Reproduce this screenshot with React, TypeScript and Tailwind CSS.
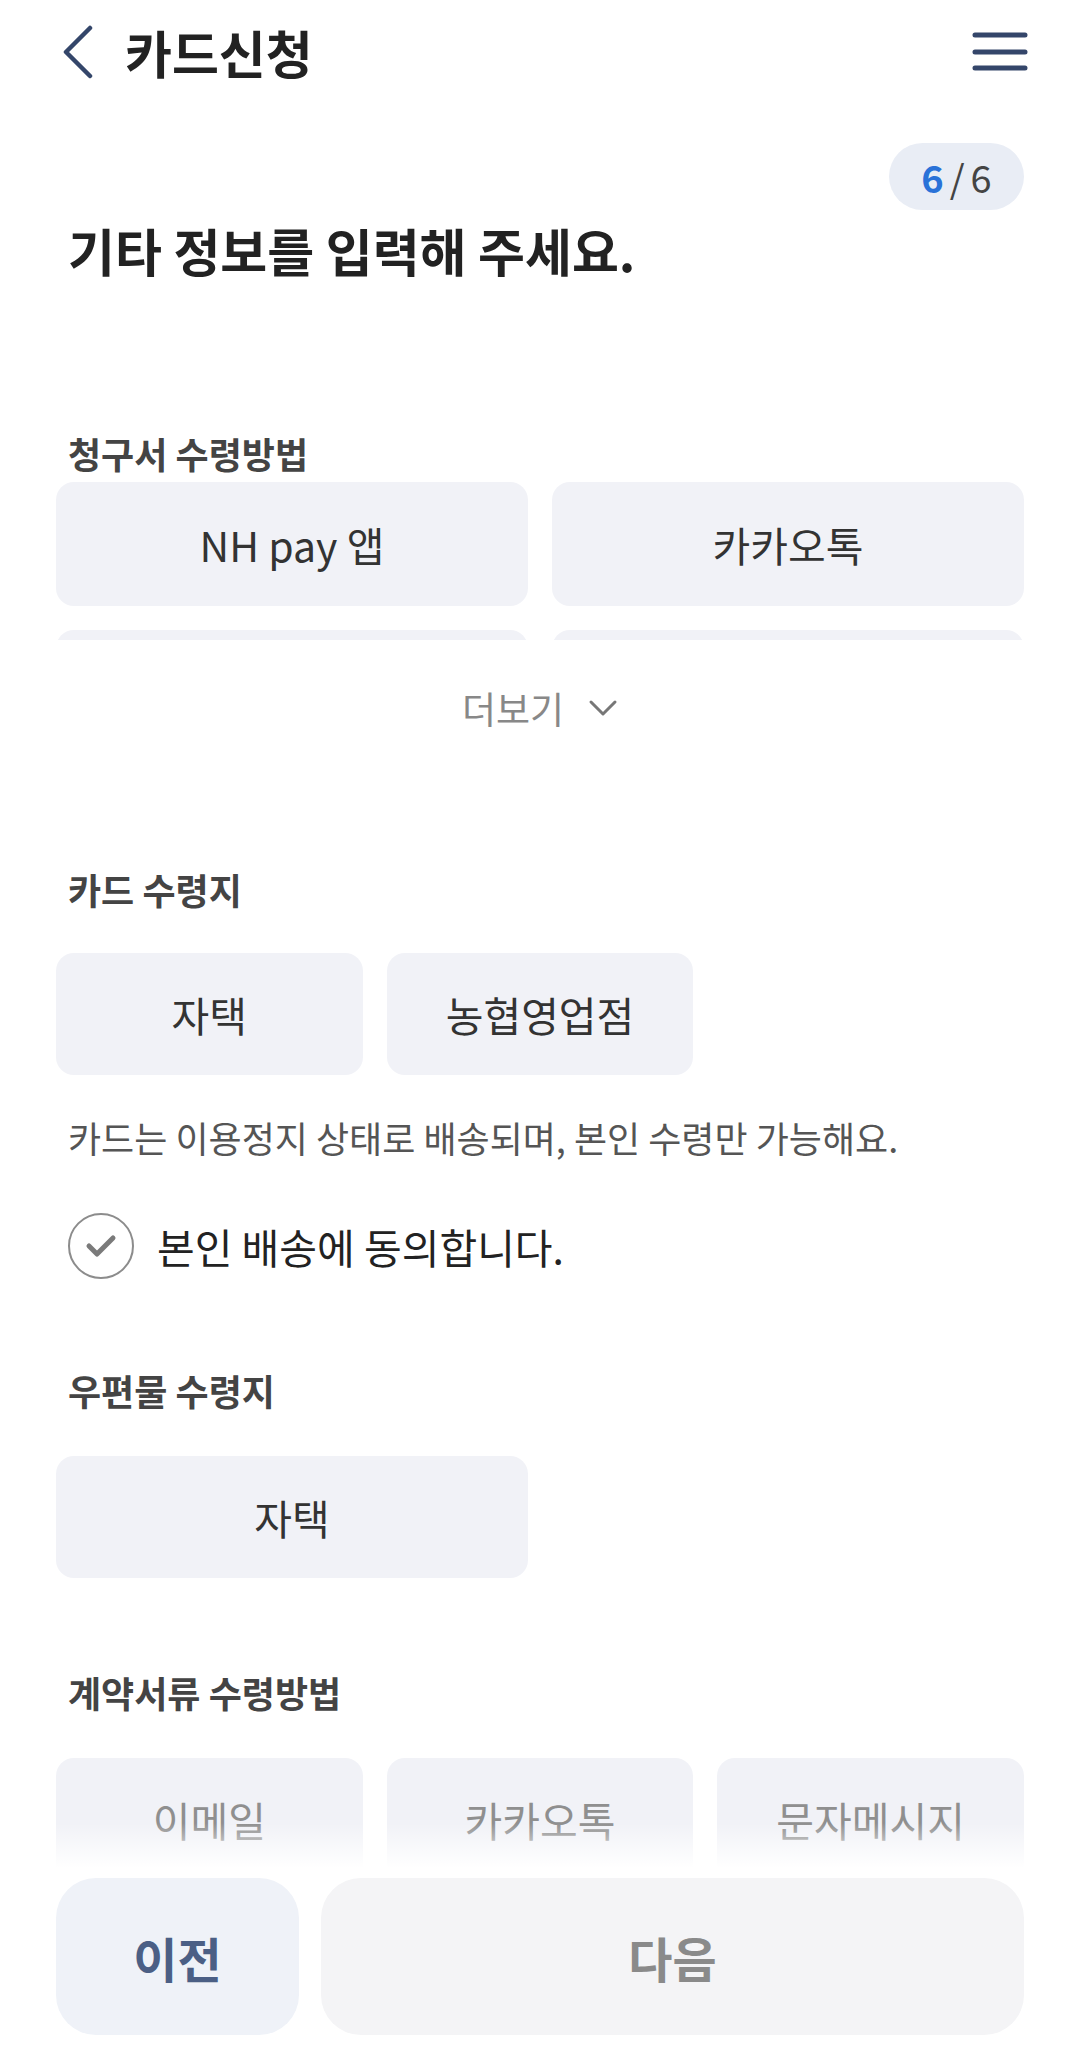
import { ReactNode } from 'react'

const font = "font-['Noto_Sans_CJK_KR','Noto_Sans',sans-serif]"

function Label({ children, className = '' }: { children: ReactNode; className?: string }) {
  return (
    <div className={`flex h-[40px] items-center px-[68px] text-[36px] font-bold leading-none text-[#444] ${className}`}>
      {children}
    </div>
  )
}

function Option({ label, h = 'h-[122px]', muted = false }: { label?: string; h?: string; muted?: boolean }) {
  return (
    <button
      className={`flex ${h} items-center justify-center rounded-[18px] bg-[#f1f2f7] text-[41px] leading-none ${
        muted ? 'text-[#8f8f8f]' : 'text-[#333]'
      }`}
    >
      {label}
    </button>
  )
}

export default function App() {
  return (
    <div className={`relative h-[2056px] overflow-hidden bg-white ${font}`}>
      {/* header */}
      <header className="flex h-[104px] items-center justify-between pl-[62px] pr-[52px]">
        <div className="flex items-center gap-[31px]">
          <svg width="32" height="54" viewBox="0 0 32 54" fill="none">
            <path d="M28 3 L4 27 L28 51" stroke="#34466a" strokeWidth="4.5" strokeLinecap="round" strokeLinejoin="round" />
          </svg>
          <h1 className="text-[51px] font-bold leading-none text-[#222]">카드신청</h1>
        </div>
        <svg width="56" height="40" viewBox="0 0 56 40" fill="none">
          <path d="M3 3 H53 M3 20 H53 M3 36 H53" stroke="#34466a" strokeWidth="5" strokeLinecap="round" />
        </svg>
      </header>

      {/* step badge */}
      <div className="mt-[39px] flex justify-end pr-[56px]">
        <div className="flex h-[67px] w-[135px] items-center justify-center rounded-full bg-[#e9edf5] text-[38px] leading-none">
          <span className="font-semibold text-[#2a72d8]">6</span>
          <span className="mx-[6px] text-[#444]">/</span>
          <span className="text-[#444]">6</span>
        </div>
      </div>

      <div className="mt-[10px] flex h-[60px] items-center px-[68px] text-[51px] font-bold leading-none text-[#222]">
        기타 정보를 입력해 주세요.
      </div>

      {/* 청구서 수령방법 */}
      <Label className="mt-[153px]">청구서 수령방법</Label>
      <div className="mx-[56px] mt-[9px] h-[158px] overflow-hidden">
        <div className="grid grid-cols-2 gap-[24px]">
          <Option label="NH pay 앱" h="h-[124px]" />
          <Option label="카카오톡" h="h-[124px]" />
          <Option h="h-[124px]" />
          <Option h="h-[124px]" />
        </div>
      </div>
      <div className="mt-[43px] flex h-[50px] items-center justify-center gap-[24px] text-[37px] leading-none text-[#888]">
        <span>더보기</span>
        <svg width="30" height="20" viewBox="0 0 30 20" fill="none">
          <path d="M3 4 L15 16 L27 4" stroke="#777" strokeWidth="3" strokeLinecap="round" strokeLinejoin="round" />
        </svg>
      </div>

      {/* 카드 수령지 */}
      <Label className="mt-[136px]">카드 수령지</Label>
      <div className="mx-[56px] mt-[44px] grid grid-cols-3 gap-[24px]">
        <Option label="자택" />
        <Option label="농협영업점" />
      </div>
      <p className="mt-[42px] flex h-[40px] items-center px-[68px] text-[36px] leading-none text-[#555]">
        카드는 이용정지 상태로 배송되며, 본인 수령만 가능해요.
      </p>
      <label className="mt-[56px] flex items-center gap-[23px] px-[68px]">
        <span className="flex h-[66px] w-[66px] items-center justify-center rounded-full border-[2.5px] border-[#8c8c8c]">
          <svg width="32" height="26" viewBox="0 0 32 26" fill="none">
            <path d="M4 13 L12 21 L28 5" stroke="#7a7a7a" strokeWidth="5" strokeLinecap="round" strokeLinejoin="round" />
          </svg>
        </span>
        <span className="text-[41px] leading-none text-[#222]">본인 배송에 동의합니다.</span>
      </label>

      {/* 우편물 수령지 */}
      <Label className="mt-[91px]">우편물 수령지</Label>
      <div className="mx-[56px] mt-[46px] grid grid-cols-2 gap-[24px]">
        <Option label="자택" />
      </div>

      {/* 계약서류 수령방법 */}
      <Label className="mt-[94px]">계약서류 수령방법</Label>
      <div className="mx-[56px] mt-[46px] grid grid-cols-3 gap-[24px]">
        <Option label="이메일" muted />
        <Option label="카카오톡" muted />
        <Option label="문자메시지" muted />
      </div>

      {/* bottom action bar */}
      <div className="absolute inset-x-0 bottom-0">
        <div className="h-[45px] bg-gradient-to-b from-white/0 to-white" />
        <div className="flex gap-[22px] bg-white px-[56px] pb-[21px] pt-[10px]">
          <button className="flex h-[157px] w-[243px] items-center justify-center rounded-[40px] bg-[#eff2f8] text-[48px] font-bold leading-none text-[#4b5f85]">
            이전
          </button>
          <button className="flex h-[157px] flex-1 items-center justify-center rounded-[40px] bg-[#f4f4f6] text-[48px] font-bold leading-none text-[#8a8a8a]">
            다음
          </button>
        </div>
      </div>
    </div>
  )
}
